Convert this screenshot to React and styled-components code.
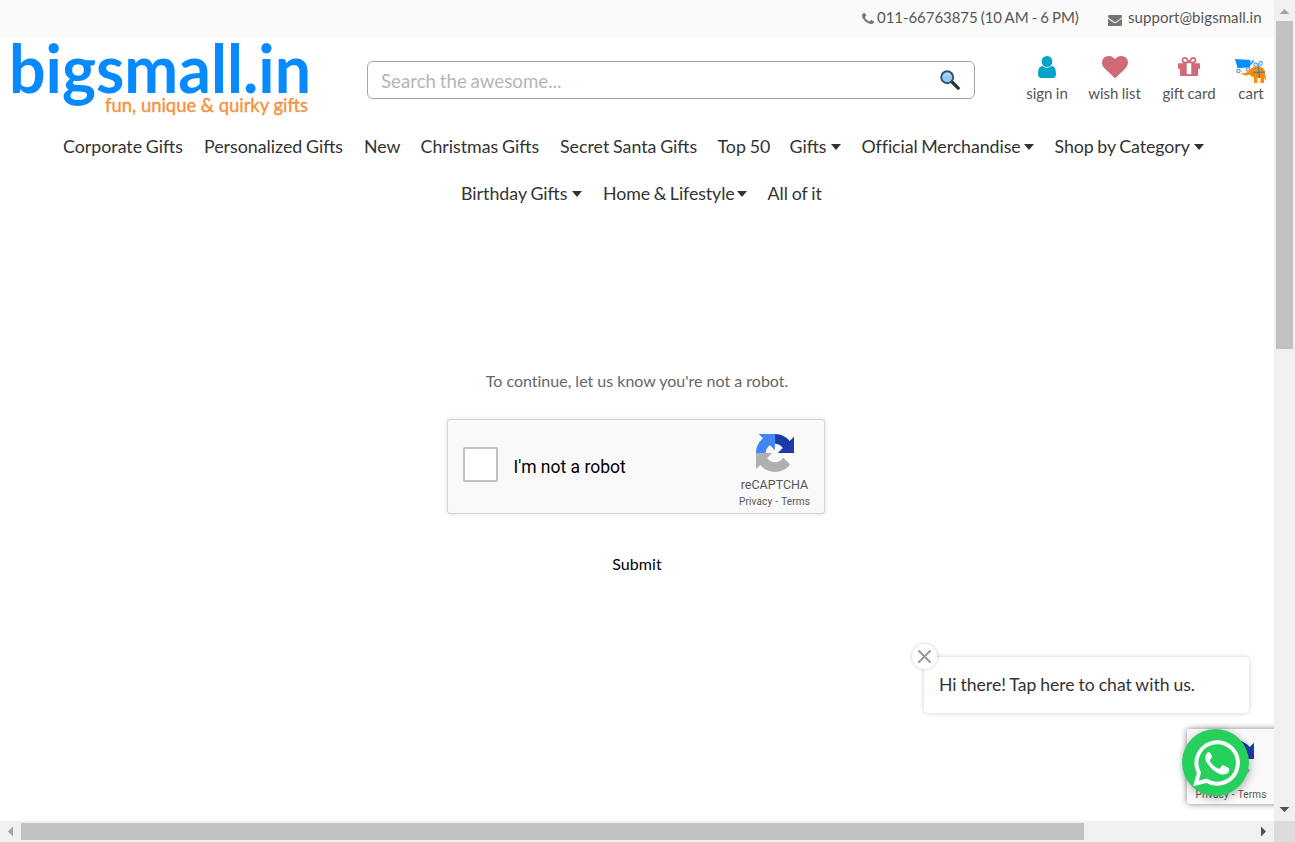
import React from "react";
import styled, { createGlobalStyle } from "styled-components";

const Global = createGlobalStyle`
  * { box-sizing: border-box; }
  body { margin: 0; background: #fff; font-family: Lato, "Liberation Sans", sans-serif; overflow: hidden; }
  a { color: inherit; text-decoration: none; }
`;

const Frame = styled.div`
  display: grid;
  grid-template-columns: 1274px 21px;
  grid-template-rows: 821px 21px;
  width: 1295px;
  height: 842px;
`;
const Page = styled.div`
  position: relative;
  overflow: hidden;
  background: #fff;
`;
const TopBar = styled.div`
  display: flex;
  height: 37px;
  padding-left: 862px;
  background: #fafafa;
  color: #555;
  font-size: 15px;
  line-height: 35px;
  white-space: nowrap;
`;
const Contact = styled.a`
  display: flex;
  width: ${(p) => p.$width}px;
  gap: ${(p) => p.$gap}px;
  word-spacing: -0.7px;
  letter-spacing: ${(p) => p.$tracking || 0}px;
  svg { flex: none; margin-top: ${(p) => p.$drop}px; fill: #757575; }
`;
const Header = styled.header`
  display: flex;
  height: 86px;
  align-items: flex-start;
`;
const Logo = styled.svg`
  flex: none;
  width: 300px;
  height: 82px;
  margin: 3px 0 0 12px;
  overflow: visible;
  font-family: Lato, sans-serif;
`;
const SearchBox = styled.div`
  display: flex;
  flex: none;
  align-items: center;
  justify-content: space-between;
  width: 608px;
  height: 38px;
  margin: 24px 0 0 55px;
  padding: 0 14px 0 13px;
  border: 1px solid #a5a5a5;
  border-radius: 6px;
  color: #b5b5b5;
  font-size: 18.7px;
  word-spacing: -1px;
  span { padding-top: 2px; }
  svg { margin-bottom: 1px; }
`;
const Actions = styled.div`
  display: flex;
  flex: none;
  margin: 19px 0 0 51px;
`;
const Action = styled.a`
  display: flex;
  flex-direction: column;
  align-items: center;
  flex: none;
  width: ${(p) => p.$width}px;
  margin-right: ${(p) => p.$after || 0}px;
  color: #555;
  font-size: 15px;
  line-height: 18px;
  white-space: nowrap;
  word-spacing: -0.5px;
`;
const ActionIcon = styled.span`
  display: flex;
  height: 28px;
  padding-top: ${(p) => p.$top || 0}px;
`;
const Nav = styled.nav`
  color: #333;
  font-size: 17.8px;
  line-height: 47px;
  word-spacing: -0.8px;
`;
const NavRow = styled.div`
  display: flex;
  height: 47px;
  gap: 21px;
  padding-left: ${(p) => p.$left}px;
`;
const NavLink = styled.a`
  display: flex;
  flex: none;
  align-items: center;
  justify-content: space-between;
  width: ${(p) => p.$width}px;
  letter-spacing: ${(p) => p.$tracking || 0}px;
  font-variant-ligatures: common-ligatures;
  white-space: nowrap;
`;
const Caret = styled.i`
  border: 5.5px solid transparent;
  border-width: 6.5px 5.5px 0;
  border-top-color: #333;
`;
const Challenge = styled.main`
  display: flex;
  flex-direction: column;
  align-items: center;
  padding-top: 154px;
`;
const Prompt = styled.p`
  margin: 0;
  color: #666;
  font-size: 16px;
  line-height: 20px;
  font-variant-ligatures: none;
`;
const Captcha = styled.div`
  display: flex;
  width: 378px;
  height: 95px;
  margin: 28px 2px 0 0;
  border: 1px solid #d3d3d3;
  border-radius: 3px;
  background: #f9f9f9;
  box-shadow: 0 0 4px 1px rgba(0, 0, 0, 0.08);
  font-family: Roboto, sans-serif;
`;
const Checkbox = styled.span`
  width: 35px;
  height: 35px;
  margin: 27px 15.5px 0 15px;
  border: 2px solid #c1c1c1;
  border-radius: 2px;
  background: #fff;
`;
const CaptchaLabel = styled.span`
  flex: 1;
  color: #000;
  font-size: 17.5px;
  line-height: 95px;
`;
const Brand = styled.div`
  display: flex;
  flex-direction: column;
  align-items: center;
  flex: none;
  width: 99px;
  padding-top: 14px;
  color: #555;
`;
const BrandName = styled.span`
  margin-top: 5px;
  font-size: 12.5px;
  line-height: 16px;
`;
const Legal = styled.span`
  display: flex;
  gap: 3px;
  margin-top: 3px;
  font-size: 10px;
  line-height: 12px;
  letter-spacing: 0.15px;
`;
const Submit = styled.button`
  margin-top: 40px;
  padding: 0;
  border: 0;
  background: none;
  color: #000;
  font: 16px/20px Lato, sans-serif;
  letter-spacing: 0.1px;
`;
const Badge = styled.div`
  position: absolute;
  left: 1187px;
  top: 729px;
  display: flex;
  width: 320px;
  height: 75px;
  border-radius: 3px;
  background: #f9f9f9;
  box-shadow: 0 0 6px gray;
  font-family: Roboto, sans-serif;
  ${Brand} { width: 88px; padding-top: 11px; }
  ${Legal} { margin-top: 7px; }
`;
const BadgeMark = styled.span`
  display: flex;
  height: 42px;
  padding-left: 7px;
`;
const WhatsApp = styled.a`
  position: absolute;
  left: 1182px;
  top: 729px;
  display: flex;
  align-items: center;
  justify-content: center;
  width: 67px;
  height: 67px;
  border-radius: 50%;
  background: #25d05d;
  box-shadow: 1px 2px 8px rgba(0, 0, 0, 0.3);
`;
const ChatBubble = styled.div`
  position: absolute;
  left: 924px;
  top: 657px;
  width: 325px;
  height: 56px;
  padding-left: 15px;
  border-radius: 4px;
  background: #fff;
  box-shadow: 0 0 5px rgba(0, 0, 0, 0.2);
  color: #333;
  font-size: 17.6px;
  line-height: 55px;
  word-spacing: -0.6px;
  white-space: nowrap;
`;
const CloseButton = styled.span`
  position: absolute;
  left: -12px;
  top: -13px;
  display: flex;
  align-items: center;
  justify-content: center;
  width: 25px;
  height: 25px;
  border-radius: 50%;
  background: #fff;
  box-shadow: 0 0 4px rgba(0, 0, 0, 0.2);
`;
const ScrollY = styled.div`
  display: flex;
  flex-direction: column;
  align-items: center;
  justify-content: space-between;
  background: #f0f0f0;
`;
const ScrollX = styled.div`
  display: flex;
  align-items: center;
  justify-content: space-between;
  background: #f0f0f0;
`;
const Thumb = styled.div`
  width: ${(p) => p.$w}px;
  height: ${(p) => p.$h}px;
  background: #c1c1c1;
`;
const ScrollArrow = styled.svg`
  display: block;
  width: 21px;
  height: 21px;
  fill: ${(p) => (p.$active ? "#505050" : "#a3a3a3")};
`;
const ScrollStart = styled.div`
  display: flex;
  align-items: center;
  flex-direction: ${(p) => (p.$vertical ? "column" : "row")};
`;
const Corner = styled.div`
  background: #dcdcdc;
`;

const FA = {
  phone: "M1600 1240q0 27-10 70.500t-21 68.500q-21 50-122 106-94 51-186 51-27 0-53-3.500t-57.500-12.500-47-14.500-55.500-20.500-49-18q-98-35-175-83-127-79-264-216t-216-264q-48-77-83-175-3-9-18-49t-20.500-55.500-14.500-47-12.500-57.500-3.500-53q0-92 51-186 56-101 106-122 25-11 68.500-21t70.500-10q14 0 21 3 18 6 53 76 11 19 30 54t35 63.500 31 53.500q3 4 17.500 25t21.500 35.500 7 28.500q0 20-28.500 50t-62 55-62 53-28.500 46q0 9 5 22.500t8.500 20.500 14 24 11.500 19q76 137 174 235t235 174q2 1 19 11.500t24 14 20.500 8.500 22.500 5q18 0 46-28.500t53-62 55-62 50-28.500q14 0 28.500 7t35.500 21.500 25 17.500q25 15 53.500 31t63.500 35 54 30q70 35 76 53 3 7 3 21z",
  mail: "M1792 710v794q0 66-47 113t-113 47h-1472q-66 0-113-47t-47-113v-794q44 49 101 87 362 246 497 345 57 42 92.500 65.500t94.500 48 110 24.500h2q51 0 110-24.500t94.500-48 92.500-65.500q170-123 498-345 57-39 100-87zm0-294q0 79-49 151t-122 123q-376 261-468 325-10 7-42.500 31t-54 38.500-52 32.500-57.500 27-50 9h-2q-23 0-50-9t-57.500-27-52-32.500-54-38.500-42.500-31q-91-64-262-182.500t-205-142.500q-62-42-117-115.500t-55-136.500q0-78 41.500-130t118.500-52h1472q65 0 112.500 47t47.500 113z",
  user: "M1536 1399q0 109-62.500 187t-150.500 78h-854q-88 0-150.500-78t-62.500-187q0-85 8.500-160.500t31.500-152 58.500-131 94-89 134.500-34.500q131 128 313 128t313-128q76 0 134.500 34.500t94 89 58.500 131 31.500 152 8.500 160.500zm-256-887q0 159-112.500 271.500t-271.500 112.500-271.500-112.500-112.500-271.500 112.500-271.500 271.500-112.500 271.500 112.500 112.500 271.500z",
  heart: "M896 1664q-26 0-44-18l-624-602q-10-8-27.500-26t-55.500-65.500-68-97.500-53.500-121-23.500-138q0-220 127-344t351-124q62 0 126.500 21.500t120 58 95.500 68.500 76 68q36-36 76-68t95.500-68.500 120-58 126.500-21.500q224 0 351 124t127 344q0 221-229 450l-623 600q-18 18-44 18z",
  gift: "M1056 1356v-716h-320v716q0 25 18 38.500t46 13.500h192q28 0 46-13.500t18-38.500zm-456-844h195l-126-161q-26-31-69-31-40 0-68 28t-28 68 28 68 68 28zm688-96q0-40-28-68t-68-28q-43 0-69 31l-125 161h194q40 0 68-28t28-68zm376 256v320q0 14-9 23t-23 9h-96v416q0 40-28 68t-68 28h-1088q-40 0-68-28t-28-68v-416h-96q-14 0-23-9t-9-23v-320q0-14 9-23t23-9h440q-93 0-158.500-65.500t-65.500-158.500 65.500-158.500 158.500-65.500q107 0 168 77l128 165 128-165q61-77 168-77 93 0 158.500 65.500t65.500 158.500-65.500 158.500-158.500 65.500h440q14 0 23 9t9 23z",
};

const Icon = ({ name, w, h, box, fill }) => (
  <svg width={w} height={h} viewBox={box} preserveAspectRatio="none" fill={fill}>
    <path d={FA[name]} />
  </svg>
);

const SearchIcon = () => (
  <svg width="20" height="20" viewBox="0 0 20 20">
    <path d="M12 12l6.200 6.200" stroke="#263238" strokeWidth="3.200" strokeLinecap="round" />
    <circle cx="7.200" cy="7.200" r="6" fill="#90caf9" stroke="#37515e" strokeWidth="1.900" />
    <path d="M4 5.500q3-3 6.400 0" fill="none" stroke="#bbdefb" strokeWidth="1.200" />
  </svg>
);

const CartIcon = () => (
  <svg width="34" height="28" viewBox="0 0 34 28">
    <path d="M1 3l15.500 1-.5 7.500L3.500 12z" fill="#0a8cff" />
    <path d="M16 9l3.500-4.500" stroke="#0a8cff" strokeWidth="1.400" fill="none" />
    <g fill="none" stroke="#4aa8f5" strokeWidth="1.200">
      <circle cx="4.500" cy="15" r="1.700" />
      <circle cx="14" cy="13.500" r="1.700" />
      <path d="M24 11q-6-1-3.500-4 3-1 3.500 4 .5-6 3.500-5.500Q30 8 24 11" />
    </g>
    <path d="M15 15q2-4 7-4.500 8.500-.5 9 6 .2 4 1.500 8.500L30 22v5h-3.500v-5h-3v5H20v-6q-3 0-4.500-2.500-3 1.500-6 .5L6.500 17l3.500.3q3-.3 5-2.300z" fill="#ff8c00" />
    <path d="M24.500 11l1 11M19 16.500l12-.5" fill="none" stroke="#5c7f8c" strokeWidth="1.500" />
  </svg>
);

const RecaptchaMark = () => (
  <svg width="38" height="38" viewBox="0 0 64 64">
    <path fill="#1c3aa9" d="M64 31.955l-.033-1.370V4.687l-7.160 7.160C50.948 4.674 42.033.093 32.050.093v16.260c.485 0 .860.057 1.135.163 4.976.393 9.288 3.140 11.828 7.124l-8.307 8.307z" />
    <path fill="#4285f4" d="M31.862.094l-1.370.033H4.594l7.160 7.160C4.580 13.147 0 22.060 0 32.046h16.260c0-.485.057-.860.163-1.135.393-4.976 3.140-9.288 7.124-11.828l8.307 8.307z" />
    <path fill="#b0b0b0" d="M.001 32.045l.033 1.370v25.898l7.160-7.160c5.860 7.173 14.774 11.754 24.760 11.754 10.400 0 19.622-4.960 25.458-12.640l-11.736-11.860a15.550 15.550 0 0 1-4.754 5.334c-2.050 1.600-4.952 2.906-8.968 2.906-.485 0-.860-.057-1.135-.163-4.976-.393-9.288-3.140-11.828-7.124l8.307-8.307z" />
  </svg>
);

const LegalLinks = () => (
  <Legal><a>Privacy</a><span>-</span><a>Terms</a></Legal>
);

const rows = [
  {
    left: 63,
    items: [
      { label: "Corporate Gifts", width: 120 },
      { label: "Personalized Gifts", width: 139 },
      { label: "New", width: 35.5 },
      { label: "Christmas Gifts", width: 118.5 },
      { label: "Secret Santa Gifts", width: 136.5 },
      { label: "Top 50", width: 51 },
      { label: "Gifts", width: 51, menu: true },
      { label: "Official Merchandise", width: 172, menu: true, tracking: -0.08 },
      { label: "Shop by Category", width: 149, menu: true, tracking: -0.08 },
    ],
  },
  {
    left: 461,
    items: [
      { label: "Birthday Gifts", width: 121, menu: true },
      { label: "Home & Lifestyle", width: 143.5, menu: true, tracking: -0.1 },
      { label: "All of it", width: 54 },
    ],
  },
];

export default function App() {
  return (
    <Frame>
      <Global />
      <Page>
        <TopBar>
          <Contact $width={246} $gap={3} $drop={13} $tracking={-0.05}>
            <Icon name="phone" w={12} h={11} box="192 128 1408 1408" />
            <span>011-66763875 (10 AM - 6 PM)</span>
          </Contact>
          <Contact $width={160} $gap={6} $drop={15} $tracking={0.07}>
            <Icon name="mail" w={14} h={11} box="0 256 1792 1408" />
            <span>support@bigsmall.in</span>
          </Contact>
        </TopBar>
        <Header>
          <Logo viewBox="0 0 300 82">
            <text x="-3" y="52.500" fill="#078aff" fontSize="67" fontWeight="700" textLength="302" lengthAdjust="spacingAndGlyphs">bigsmall.in</text>
            <text x="93" y="72" fill="#f5923e" stroke="#f5923e" strokeWidth="0.4" fontSize="19.500" fontWeight="400" textLength="203" lengthAdjust="spacingAndGlyphs">fun, unique &amp; quirky gifts</text>
          </Logo>
          <SearchBox><span>Search the awesome...</span><SearchIcon /></SearchBox>
          <Actions>
            <Action $width={42} $after={20}>
              <ActionIcon><Icon name="user" w={18} h={22} box="256 128 1280 1536" fill="#00a5c8" /></ActionIcon>sign in
            </Action>
            <Action $width={53} $after={21}>
              <ActionIcon><Icon name="heart" w={26} h={22} box="0 128 1792 1536" fill="#cf6b78" /></ActionIcon>wish list
            </Action>
            <Action $width={54} $after={18}>
              <ActionIcon $top={1}><Icon name="gift" w={22} h={19} box="128 192 1536 1344" fill="#cf6b78" /></ActionIcon>gift card
            </Action>
            <Action $width={34}>
              <ActionIcon><CartIcon /></ActionIcon>cart
            </Action>
          </Actions>
        </Header>
        <Nav>
          {rows.map((row) => (
            <NavRow key={row.left} $left={row.left}>
              {row.items.map(({ label, width, menu, tracking }) => (
                <NavLink key={label} $width={width} $tracking={tracking}>{label}{menu && <Caret />}</NavLink>
              ))}
            </NavRow>
          ))}
        </Nav>
        <Challenge>
          <Prompt>To continue, let us know you're not a robot.</Prompt>
          <Captcha>
            <Checkbox />
            <CaptchaLabel>I'm not a robot</CaptchaLabel>
            <Brand>
              <RecaptchaMark />
              <BrandName>reCAPTCHA</BrandName>
              <LegalLinks />
            </Brand>
          </Captcha>
          <Submit>Submit</Submit>
        </Challenge>
        <Badge>
          <Brand>
            <BadgeMark><RecaptchaMark /></BadgeMark>
            <LegalLinks />
          </Brand>
        </Badge>
        <WhatsApp>
          <svg width="48" height="48" viewBox="0 0 48 48" fill="none">
            <path d="M4 44.500l2.900-10.800A20.700 20.700 0 1 1 14.500 41.700z" stroke="#fff" strokeWidth="4" />
            <path d="M17.500 13.500c-1-.5-2 0-3 1.200-2 2.500-1.800 5.800.5 9.300 3.500 5.300 7.500 9 13 11 4 1.400 8 .2 9-3 .5-1.700.4-2.700-.2-3l-5-2.500c-.9-.4-1.400-.2-2 .6l-1.800 2.200c-.6.7-1.200.7-2 .3-3.500-1.600-6-4-8-7.300-.4-.7-.3-1.200.3-1.800l1.500-2c.4-.5.400-1 .1-1.700l-1.700-3c-.2-.3-.4-.3-.7-.3z" fill="#fff" />
          </svg>
        </WhatsApp>
        <ChatBubble>
          Hi there! Tap here to chat with us.
          <CloseButton>
            <svg width="13" height="13" viewBox="0 0 13 13"><path d="M1 1l11 11M12 1L1 12" stroke="#999" strokeWidth="2" strokeLinecap="round" /></svg>
          </CloseButton>
        </ChatBubble>
      </Page>
      <ScrollY>
        <ScrollStart $vertical>
          <ScrollArrow viewBox="0 0 21 21"><path d="M10.500 9l5 5h-10z" /></ScrollArrow>
          <Thumb $w={17} $h={328} />
        </ScrollStart>
        <ScrollArrow $active viewBox="0 0 21 21"><path d="M10.500 12l5-5h-10z" /></ScrollArrow>
      </ScrollY>
      <ScrollX>
        <ScrollStart>
          <ScrollArrow viewBox="0 0 21 21"><path d="M8 10.500l5-5v10z" /></ScrollArrow>
          <Thumb $w={1063} $h={17} />
        </ScrollStart>
        <ScrollArrow $active viewBox="0 0 21 21"><path d="M13 10.500l-5-5v10z" /></ScrollArrow>
      </ScrollX>
      <Corner />
    </Frame>
  );
}
